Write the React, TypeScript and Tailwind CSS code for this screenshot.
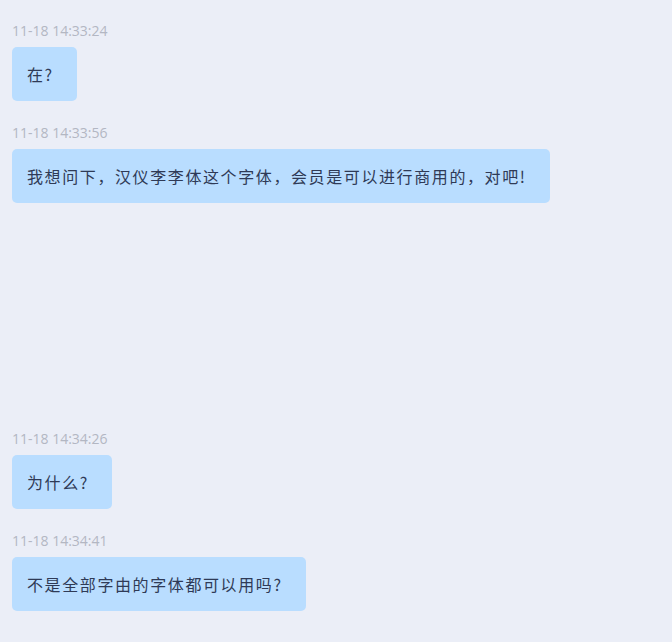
import React from "react";

const groups: { time: string; text: string }[] = [
  { time: "11-18 14:33:24", text: "在?" },
  { time: "11-18 14:33:56", text: "我想问下，汉仪李李体这个字体，会员是可以进行商用的，对吧!" },
];
const groups2: { time: string; text: string }[] = [
  { time: "11-18 14:34:26", text: "为什么?" },
  { time: "11-18 14:34:41", text: "不是全部字由的字体都可以用吗?" },
];

function Msg({ time, text }: { time: string; text: string }) {
  return (
    <div className="flex flex-col items-start">
      <div
        className="h-[20px] text-[14px] leading-[20px] text-[#b3b7c3]"
        style={{ fontFamily: '"Open Sans", "Noto Sans CJK SC", sans-serif' }}
      >
        {time}
      </div>
      <div
        className="mt-[6px] mb-[22px] rounded-[5px] bg-[#b9ddff] pl-[15px] pr-[23px] pt-[15px] pb-[15px] text-[16px] leading-[24px] tracking-[1.6px] text-[#2f3a56]"
        style={{ fontFamily: '"Noto Sans CJK SC", sans-serif' }}
      >
        {text}
      </div>
    </div>
  );
}

export default function App() {
  return (
    <div className="min-h-[642px] w-[672px] bg-[#ebeef7] px-[12px] pt-[21px]">
      {groups.map((g) => (
        <Msg key={g.time} {...g} />
      ))}
      <div className="h-[204px]" />
      {groups2.map((g) => (
        <Msg key={g.time} {...g} />
      ))}
    </div>
  );
}
